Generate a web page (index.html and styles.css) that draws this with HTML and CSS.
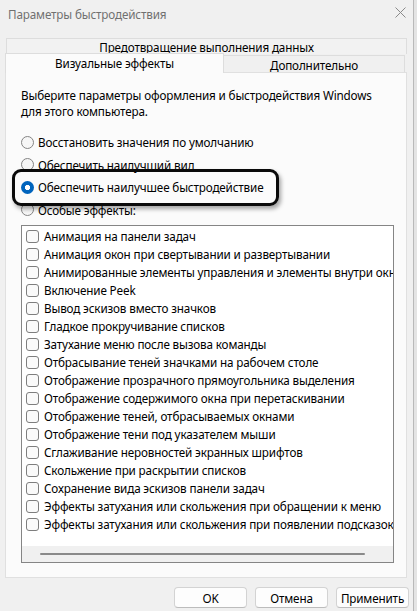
FILE: index.html
```html
<!DOCTYPE html>
<html lang="ru">
<head>
<meta charset="utf-8">
<title>Параметры быстродействия</title>
<link rel="stylesheet" href="styles.css">
</head>
<body>
<div class="screen">
  <div class="window">
    <div class="titlebar">
      <span class="title">Параметры быстродействия</span>
      <svg class="close" width="11" height="11" viewBox="0 0 11 11"><path d="M0.5 0.5L10.5 10.5M10.5 0.5L0.5 10.5"/></svg>
    </div>
    <div class="tabs">
      <div class="tab-row1"><div class="tab tab-top">Предотвращение выполнения данных</div></div>
      <div class="tab-row2">
        <div class="tab tab-active">Визуальные эффекты</div>
        <div class="tab tab-other">Дополнительно</div>
      </div>
    </div>
    <div class="panel">
      <p class="desc">Выберите параметры оформления и быстродействия Windows<br>для этого компьютера.</p>
      <div class="radios">
        <div class="radio-row"><span class="radio"></span><span>Восстановить значения по умолчанию</span></div>
        <div class="radio-row"><span class="radio"></span><span>Обеспечить наилучший вид</span></div>
        <div class="radio-row"><span class="radio radio-on"></span><span>Обеспечить наилучшее быстродействие</span></div>
        <div class="radio-row"><span class="radio"></span><span>Особые эффекты:</span></div>
      </div>
      <div class="highlight"></div>
      <div class="listbox">
        <div class="list">
          <div class="item"><span class="check"></span><span>Анимация на панели задач</span></div>
          <div class="item"><span class="check"></span><span>Анимация окон при свертывании и развертывании</span></div>
          <div class="item"><span class="check"></span><span>Анимированные элементы управления и элементы внутри окна</span></div>
          <div class="item"><span class="check"></span><span>Включение Peek</span></div>
          <div class="item"><span class="check"></span><span>Вывод эскизов вместо значков</span></div>
          <div class="item"><span class="check"></span><span>Гладкое прокручивание списков</span></div>
          <div class="item"><span class="check"></span><span>Затухание меню после вызова команды</span></div>
          <div class="item"><span class="check"></span><span>Отбрасывание теней значками на рабочем столе</span></div>
          <div class="item"><span class="check"></span><span>Отображение прозрачного прямоугольника выделения</span></div>
          <div class="item"><span class="check"></span><span>Отображение содержимого окна при перетаскивании</span></div>
          <div class="item"><span class="check"></span><span>Отображение теней, отбрасываемых окнами</span></div>
          <div class="item"><span class="check"></span><span>Отображение тени под указателем мыши</span></div>
          <div class="item"><span class="check"></span><span>Сглаживание неровностей экранных шрифтов</span></div>
          <div class="item"><span class="check"></span><span>Скольжение при раскрытии списков</span></div>
          <div class="item"><span class="check"></span><span>Сохранение вида эскизов панели задач</span></div>
          <div class="item"><span class="check"></span><span>Эффекты затухания или скольжения при обращении к меню</span></div>
          <div class="item"><span class="check"></span><span>Эффекты затухания или скольжения при появлении подсказок</span></div>
        </div>
        <div class="hscroll"><div class="thumb"></div></div>
      </div>
    </div>
    <div class="buttons">
      <div class="btn">OK</div>
      <div class="btn">Отмена</div>
      <div class="btn">Применить</div>
    </div>
  </div>
  <div class="edge"></div>
</div>
</body>
</html>
```
FILE: styles.css
```css
* { box-sizing: border-box; }
html, body { margin: 0; padding: 0; }
body {
  width: 417px;
  height: 611px;
  overflow: hidden;
  font-family: "Noto Sans", "DejaVu Sans", sans-serif;
  font-size: 11.7px;
  letter-spacing: -0.15px;
  color: #000;
  background: #f0f0f0;
}
.screen { display: flex; height: 611px; }
.window {
  width: 413px;
  height: 611px;
  background: #f0f0f0;
  display: flex;
  flex-direction: column;
}
.edge {
  flex: 1;
  background: #e4e4e4;
  border-left: 1px solid #b9b9b9;
}
.titlebar {
  height: 28px;
  display: flex;
  align-items: center;
  justify-content: space-between;
  padding: 0 7px 0 8px;
}
.title { color: #707070; line-height: 16px; }
.close {
  align-self: flex-start;
  margin-top: 7px;
  fill: none;
  stroke: #8a8a8a;
  stroke-width: 1;
}
.tabs { margin-top: 10px; }
.tab {
  line-height: 14px;
  text-align: center;
  display: flex;
  align-items: center;
  justify-content: center;
}
.tab-row1 { padding-left: 6px; }
.tab-top {
  width: 401px;
  height: 16px;
  border: 1px solid #dddddd;
  border-bottom: none;
  background: #f2f2f2;
}
.tab-row2 {
  display: flex;
  align-items: flex-end;
  padding-left: 5px;
  margin-top: -1px;
  margin-bottom: -1px;
  height: 20px;
  position: relative;
  z-index: 2;
}
.tab-active {
  width: 219px;
  height: 20px;
  border: 1px solid #dddddd;
  border-bottom: none;
  background: #fbfbfb;
  padding-bottom: 1px;
}
.tab-other {
  width: 181px;
  height: 17px;
  margin-bottom: 1px;
  border: 1px solid #dddddd;
  border-left: none;
  border-bottom: none;
  background: #f0f0f0;
  padding-top: 1px;
}
.panel {
  position: relative;
  margin-left: 5px;
  width: 402px;
  height: 506px;
  border: 1px solid #e0e0e0;
  background: #fbfbfb;
  padding: 14px 0 0 15px;
}
.desc { margin: 0; line-height: 16px; }
.radios { margin-top: 12px; }
.radio-row {
  height: 22.5px;
  display: flex;
  align-items: center;
  gap: 4px;
}
.radio {
  width: 13px;
  height: 13px;
  border-radius: 50%;
  border: 1px solid #858585;
  background: #f6f6f6;
  flex: none;
}
.radio-on {
  border: none;
  background: radial-gradient(circle, #ffffff 0 2.4px, #0064bd 2.9px);
}
.highlight {
  position: absolute;
  left: 6px;
  top: 96px;
  width: 267px;
  height: 37px;
  border: 3px solid #0a0a0a;
  border-radius: 9px;
  box-shadow: 2px 3px 4px rgba(0, 0, 0, 0.35);
}
.listbox {
  margin-top: 4px;
  width: 373px;
  height: 338px;
  border: 1px solid #858585;
  background: #ffffff;
  display: flex;
  flex-direction: column;
}
.list {
  height: 320px;
  overflow: hidden;
  padding: 1px 0 0 4px;
}
.item {
  height: 18px;
  display: flex;
  align-items: center;
  gap: 5px;
  white-space: nowrap;
}
.check {
  width: 13px;
  height: 13px;
  border: 1px solid #7e7e7e;
  border-radius: 3px;
  background: #fafafa;
  flex: none;
}
.hscroll {
  height: 16px;
  background: #f0f0f0;
  padding: 7px 0 0 18px;
}
.thumb {
  width: 325px;
  height: 2px;
  border-radius: 1px;
  background: #8a8a8a;
}
.buttons {
  margin-top: 9px;
  display: flex;
  justify-content: flex-end;
  gap: 8px;
  padding-right: 4px;
}
.btn {
  width: 73px;
  height: 21px;
  border: 1px solid #d3d3d3;
  border-bottom-color: #bcbcbc;
  border-radius: 4px;
  background: #fdfdfd;
  display: flex;
  align-items: center;
  justify-content: center;
  line-height: 14px;
}
```
